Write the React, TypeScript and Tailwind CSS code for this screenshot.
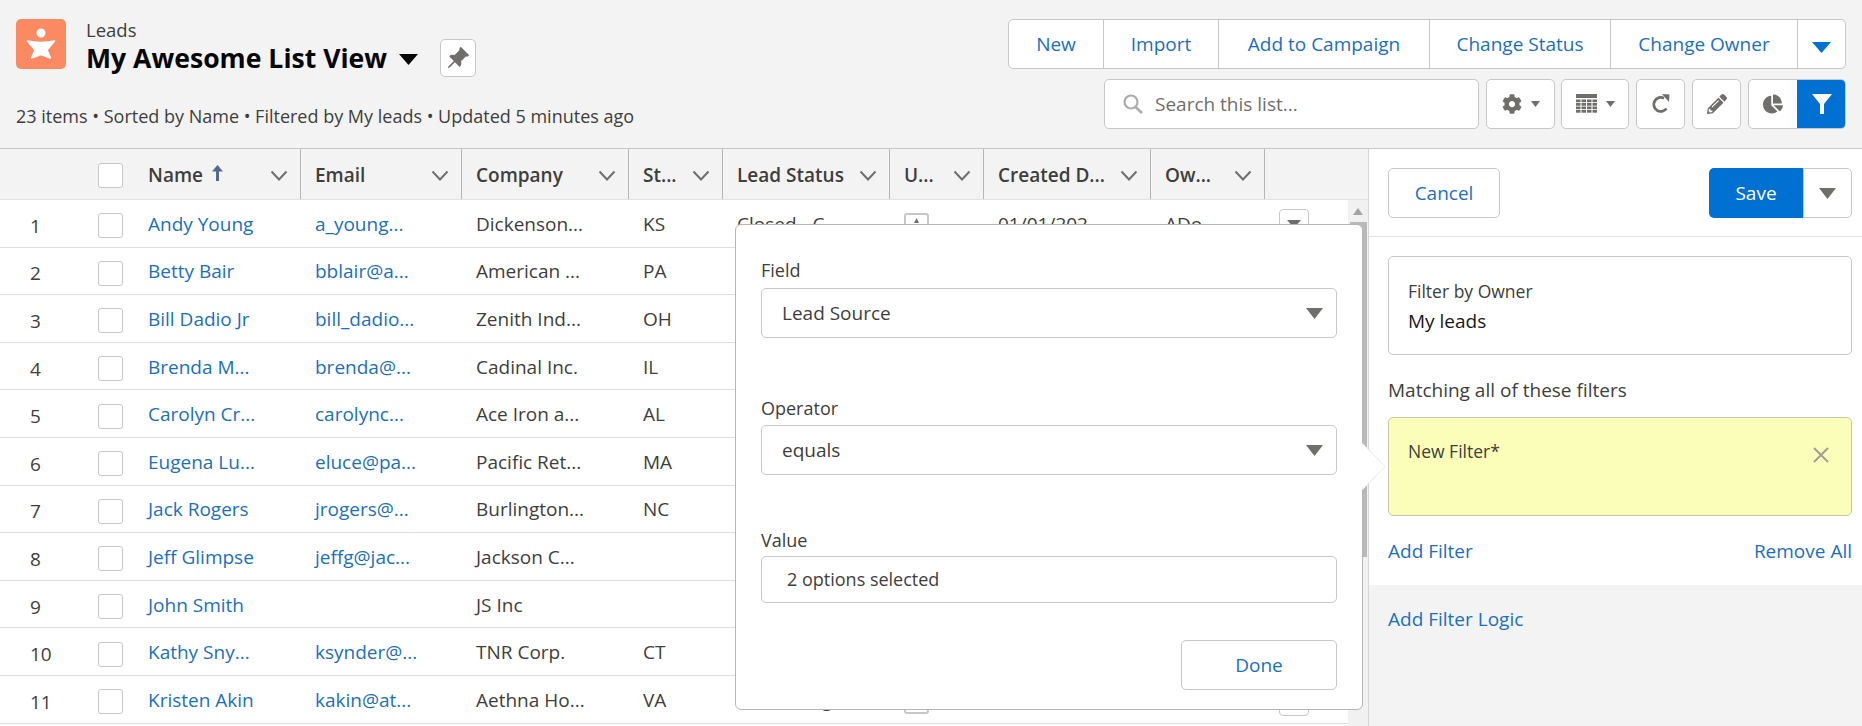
import React from "react";
import { FaCog, FaPencilAlt, FaChartPie } from "react-icons/fa";
import { BsPinAngleFill } from "react-icons/bs";

const GRID = "grid grid-cols-[134px_167px_161px_167px_94px_167px_94px_167px_114px_1fr]";

const rows = [
  ["1", "Andy Young", "a_young...", "Dickenson...", "KS", "Closed - C...", "01/01/202...", "ADo..."],
  ["2", "Betty Bair", "bblair@a...", "American ...", "PA", "", "", ""],
  ["3", "Bill Dadio Jr", "bill_dadio...", "Zenith Ind...", "OH", "", "", ""],
  ["4", "Brenda M...", "brenda@...", "Cadinal Inc.", "IL", "", "", ""],
  ["5", "Carolyn Cr...", "carolync...", "Ace Iron a...", "AL", "", "", ""],
  ["6", "Eugena Lu...", "eluce@pa...", "Pacific Ret...", "MA", "", "", ""],
  ["7", "Jack Rogers", "jrogers@...", "Burlington...", "NC", "", "", ""],
  ["8", "Jeff Glimpse", "jeffg@jac...", "Jackson C...", "", "", "", ""],
  ["9", "John Smith", "", "JS Inc", "", "", "", ""],
  ["10", "Kathy Sny...", "ksynder@...", "TNR Corp.", "CT", "", "", ""],
  ["11", "Kristen Akin", "kakin@at...", "Aethna Ho...", "VA", "Contacting", "", ""],
];

function Chevron() {
  return (
    <svg width="18" height="11" viewBox="0 0 18 11" className="shrink-0">
      <path d="M1.5 1.5 L9 9.5 L16.5 1.5" fill="none" stroke="#706e6b" strokeWidth="2" />
    </svg>
  );
}

function Tri({ w, h, color }: { w: number; h: number; color: string }) {
  return (
    <svg width={w} height={h} viewBox="0 0 10 6" preserveAspectRatio="none" className="shrink-0">
      <path d="M0 0 H10 L5 6 Z" fill={color} />
    </svg>
  );
}

function Box() {
  return <div className="h-[25px] w-[25px] shrink-0 rounded-[3px] border border-[#c9c7c5] bg-white" />;
}

function HeaderCell({ label, children }: { label: string; children?: React.ReactNode }) {
  return (
    <div className="flex h-[50px] items-center border-r border-[#b8b6b4] pl-[14px] pr-[12px] pt-[3px]">
      <span className="whitespace-nowrap text-[19px] font-semibold text-[#3e3e3c]">{label}</span>
      {children}
      <span className="ml-auto">
        <Chevron />
      </span>
    </div>
  );
}

function IconButton({ className, children }: { className: string; children: React.ReactNode }) {
  return (
    <div className={"flex h-[50px] items-center justify-center gap-[9px] rounded-[5px] border border-[#c9c7c5] bg-white " + className}>
      {children}
    </div>
  );
}

function Select({ value }: { value: string }) {
  return (
    <div className="flex h-[50px] items-center justify-between rounded-[5px] border border-[#c9c7c5] bg-white pl-[20px] pr-[13px] text-[19px] text-[#3e3e3c]">
      <span>{value}</span>
      <Tri w={17} h={11} color="#706e6b" />
    </div>
  );
}

export default function App() {
  return (
    <div className="relative flex h-[726px] w-[1862px] flex-col overflow-hidden bg-[#f3f3f3] font-['Open_Sans',sans-serif] text-[19px] text-[#3e3e3c]">
      {/* page header */}
      <header className="flex h-[149px] shrink-0 justify-between border-b border-[#c9c7c5] pl-[16px] pr-[16px] pt-[19px]">
        <div className="flex flex-col">
          <div className="flex">
            <div className="h-[50px] w-[50px] rounded-[5px] bg-[#fb8a63]">
              <svg viewBox="0 0 50 50" width="50" height="50">
                <circle cx="25" cy="14" r="4.5" fill="#fff" />
                <path d="M11.5 22 Q25 25 38.5 22 L31 31 L34.5 39 L25 35.5 L15.5 39 L19 31 Z" fill="#fff" stroke="#fff" strokeWidth="1.5" strokeLinejoin="round" />
              </svg>
            </div>
            <div className="ml-[20px] flex flex-col">
              <div className="h-[20px] text-[18.5px] leading-[22px] text-[#3e3e3c]">Leads</div>
              <div className="flex items-center">
                <span className="text-[26.6px] font-bold leading-[36px] text-[#080707]">My Awesome List View</span>
                <span className="ml-[12px] mt-[2px]">
                  <Tri w={19} h={11} color="#080707" />
                </span>
                <span className="ml-[22px] flex h-[38px] w-[36px] items-center justify-center rounded-[5px] border border-[#c9c7c5] bg-white">
                  <BsPinAngleFill size={24} color="#706e6b" />
                </span>
              </div>
            </div>
          </div>
          <div className="mt-[28px] text-[18px] leading-[22px]">23 items • Sorted by Name • Filtered by My leads • Updated 5 minutes ago</div>
        </div>

        <div className="flex flex-col items-end">
          <div className="flex h-[50px] items-stretch rounded-[5px] border border-[#c9c7c5] bg-white text-[19px] text-[#1b6fc0]">
            <span className="flex w-[94px] items-center justify-center">New</span>
            <span className="flex w-[115px] items-center justify-center border-l border-[#c9c7c5]">Import</span>
            <span className="flex w-[211px] items-center justify-center border-l border-[#c9c7c5]">Add to Campaign</span>
            <span className="flex w-[181px] items-center justify-center border-l border-[#c9c7c5]">Change Status</span>
            <span className="flex w-[187px] items-center justify-center border-l border-[#c9c7c5]">Change Owner</span>
            <span className="flex w-[48px] items-center justify-center border-l border-[#c9c7c5] pt-[6px]">
              <Tri w={19} h={11} color="#0070d2" />
            </span>
          </div>
          <div className="mt-[10px] flex">
            <div className="flex h-[50px] w-[375px] items-center rounded-[5px] border border-[#c9c7c5] bg-white pl-[17px] text-[19px] text-[#706e6b]">
              <svg width="22" height="20" viewBox="0 0 22 20" className="shrink-0">
                <circle cx="9" cy="8" r="6.5" fill="none" stroke="#aeacaa" strokeWidth="2.2" />
                <path d="M13.5 13 L20 19" stroke="#aeacaa" strokeWidth="2.6" />
              </svg>
              <span className="ml-[11px]">Search this list...</span>
            </div>
            <IconButton className="ml-[7px] w-[69px]">
              <FaCog size={20} color="#706e6b" />
              <Tri w={9} h={6} color="#706e6b" />
            </IconButton>
            <IconButton className="ml-[6px] w-[68px]">
              <svg width="21" height="20" viewBox="0 0 21 20">
                <rect x="0" y="0" width="21" height="4" fill="#706e6b" />
                {[5.5, 9, 12.5, 16].map((y) =>
                  [0, 5.5, 11, 16.5].map((x) => <rect key={x + "-" + y} x={x} y={y} width="4.5" height="2.7" fill="#706e6b" />)
                )}
              </svg>
              <Tri w={9} h={6} color="#706e6b" />
            </IconButton>
            <IconButton className="ml-[7px] w-[49px]">
              <svg width="20" height="20" viewBox="0 0 20 20">
                <path d="M15.5 14.5 A7 7 0 1 1 13 4.2" fill="none" stroke="#706e6b" strokeWidth="2.8" />
                <path d="M11 0 L18.5 0.5 L18 8 Z" fill="#706e6b" />
              </svg>
            </IconButton>
            <IconButton className="ml-[7px] w-[49px]">
              <FaPencilAlt size={20} color="#706e6b" />
            </IconButton>
            <div className="ml-[7px] flex h-[50px] w-[98px] overflow-hidden rounded-[5px] border border-[#c9c7c5] bg-white">
              <span className="flex w-[48px] items-center justify-center">
                <FaChartPie size={20} color="#706e6b" />
              </span>
              <span className="-my-px -mr-px flex flex-1 items-center justify-center bg-[#0070d2]">
                <svg width="20" height="20" viewBox="0 0 20 20">
                  <path d="M0 0 H20 L12 10 V20 H8 V10 Z" fill="#fff" />
                </svg>
              </span>
            </div>
          </div>
        </div>
      </header>

      <div className="flex min-h-0 flex-1">
        {/* list */}
        <div className="flex w-[1368px] shrink-0 flex-col bg-white">
          <div className={GRID + " h-[51px] shrink-0 border-b border-[#e4e2e0] bg-[#f3f3f3]"}>
            <div className="flex h-[50px] items-center pl-[98px] pt-[3px]">
              <Box />
            </div>
            <HeaderCell label="Name">
              <svg width="11" height="16" viewBox="0 0 11 16" className="ml-[9px] mb-[6px]">
                <path d="M5.5 0 L11 6.5 H7 V16 H4 V6.5 H0 Z" fill="#54698d" />
              </svg>
            </HeaderCell>
            <HeaderCell label="Email" />
            <HeaderCell label="Company" />
            <HeaderCell label="St..." />
            <HeaderCell label="Lead Status" />
            <HeaderCell label="U..." />
            <HeaderCell label="Created D..." />
            <HeaderCell label="Ow..." />
          </div>
          <div className="flex min-h-0 flex-1">
            <div className="min-w-0 flex-1 overflow-hidden">
              {rows.map((r) => (
                <div key={r[0]} className={GRID + " h-[47.6px] items-center border-b border-[#e0dedc] pt-[5px] text-[19px] leading-[26px]"}>
                  <div className="flex items-center">
                    <span className="w-[98px] pl-[30px]">{r[0]}</span>
                    <Box />
                  </div>
                  <div className="whitespace-nowrap pb-[4px] pl-[14px] text-[#1b6fc0]">{r[1]}</div>
                  <div className="whitespace-nowrap pb-[4px] pl-[14px] text-[#1b6fc0]">{r[2]}</div>
                  <div className="whitespace-nowrap pb-[4px] pl-[14px]">{r[3]}</div>
                  <div className="pb-[4px] pl-[14px]">{r[4]}</div>
                  <div className="whitespace-nowrap pb-[4px] pl-[14px]">{r[5]}</div>
                  <div className="pl-[14px]">
                    <div className="relative h-[25px] w-[25px] rounded-[3px] border-2 border-[#c9c7c5] bg-white">
                      <svg width="13" height="6" viewBox="0 0 13 6" className="absolute left-[4px] top-[3px]">
                        <path d="M6.5 0 L9 5 H4 Z" fill="#706e6b" />
                      </svg>
                    </div>
                  </div>
                  <div className="whitespace-nowrap pb-[4px] pl-[14px]">{r[6]}</div>
                  <div className="whitespace-nowrap pb-[4px] pl-[14px]">{r[7]}</div>
                  <div className="-mt-[3px] pl-[14px]">
                    <div className="flex h-[31px] w-[30px] items-center justify-center rounded-[4px] border border-[#c9c7c5] bg-white">
                      <Tri w={14} h={8} color="#706e6b" />
                    </div>
                  </div>
                </div>
              ))}
            </div>
            {/* scrollbar */}
            <div className="flex w-[20px] shrink-0 flex-col items-center bg-[#f1f1f1] pt-[8px]">
              <svg width="10" height="7" viewBox="0 0 10 7">
                <path d="M5 0 L10 7 H0 Z" fill="#a3a3a3" />
              </svg>
              <div className="mt-[7px] h-[335px] w-[17px] bg-[#b9b9b9]" />
            </div>
          </div>
        </div>

        {/* filter panel */}
        <aside className="flex min-w-0 flex-1 flex-col border-l border-[#d8d6d4] bg-[#f3f3f3]">
          <div className="flex h-[88px] shrink-0 items-start justify-between border-b border-[#e4e2e0] bg-white pl-[19px] pr-[10px] pt-[19px]">
            <div className="flex h-[50px] w-[112px] items-center justify-center rounded-[5px] border border-[#c9c7c5] bg-white text-[#1b6fc0]">Cancel</div>
            <div className="flex">
              <div className="flex h-[50px] w-[94px] items-center justify-center rounded-l-[5px] bg-[#0070d2] text-white">Save</div>
              <div className="flex h-[50px] w-[49px] items-center justify-center rounded-r-[5px] border border-[#c9c7c5] bg-white">
                <Tri w={17} h={11} color="#706e6b" />
              </div>
            </div>
          </div>
          <div className="flex h-[348px] shrink-0 flex-col bg-white pl-[19px] pr-[10px] pt-[19px]">
            <div className="flex h-[99px] flex-col justify-center rounded-[5px] border border-[#c9c7c5] pl-[19px]">
              <div className="text-[17.5px] leading-[24px] text-[#3e3e3c]">Filter by Owner</div>
              <div className="mt-[6px] text-[19px] leading-[24px] text-[#181818]">My leads</div>
            </div>
            <div className="mt-[24px] text-[19px] leading-[22px]">Matching all of these filters</div>
            <div className="mt-[16px] flex h-[99px] items-start justify-between rounded-[5px] border border-[#c8c8a8] bg-[#fbfeb9] pl-[19px] pr-[22px] pt-[21px]">
              <span className="text-[17.5px] leading-[24px] text-[#3e3e3c]">New Filter*</span>
              <svg width="16" height="16" viewBox="0 0 16 16" className="mt-[8px]">
                <path d="M1 1 L15 15 M15 1 L1 15" stroke="#a09f95" strokeWidth="2" />
              </svg>
            </div>
            <div className="mt-[23px] flex justify-between text-[19px] leading-[24px] text-[#1b6fc0]">
              <span>Add Filter</span>
              <span>Remove All</span>
            </div>
          </div>
          <div className="pl-[19px] pt-[22px] text-[19px] leading-[24px] text-[#1b6fc0]">Add Filter Logic</div>
        </aside>
      </div>

      {/* popover */}
      <div className="absolute left-[735px] top-[224px] z-10 flex h-[486px] w-[628px] flex-col rounded-[6px] border border-[#b8b6b4] bg-white px-[25px] pt-[34px]">
        <div className="text-[18px] leading-[22px]">Field</div>
        <div className="mt-[7px]">
          <Select value="Lead Source" />
        </div>
        <div className="mt-[59px] text-[18px] leading-[22px]">Operator</div>
        <div className="mt-[6px]">
          <Select value="equals" />
        </div>
        <div className="mt-[54px] text-[18px] leading-[22px]">Value</div>
        <div className="mt-[5px] flex h-[47px] items-center rounded-[5px] border border-[#c9c7c5] pl-[25px] text-[18px]">2 options selected</div>
        <div className="mt-[37px] flex h-[50px] w-[156px] items-center justify-center self-end rounded-[5px] border border-[#c9c7c5] text-[#1b6fc0]">Done</div>
      </div>
      <svg width="24" height="48" viewBox="0 0 24 48" className="absolute left-[1362px] top-[443px] z-20">
        <path d="M0 0 L23 23.5 L0 47 Z" fill="#fff" />
        <path d="M1 1 L23 23.5 L1 46" fill="none" stroke="#e8e8e4" strokeWidth="1" />
      </svg>
    </div>
  );
}
